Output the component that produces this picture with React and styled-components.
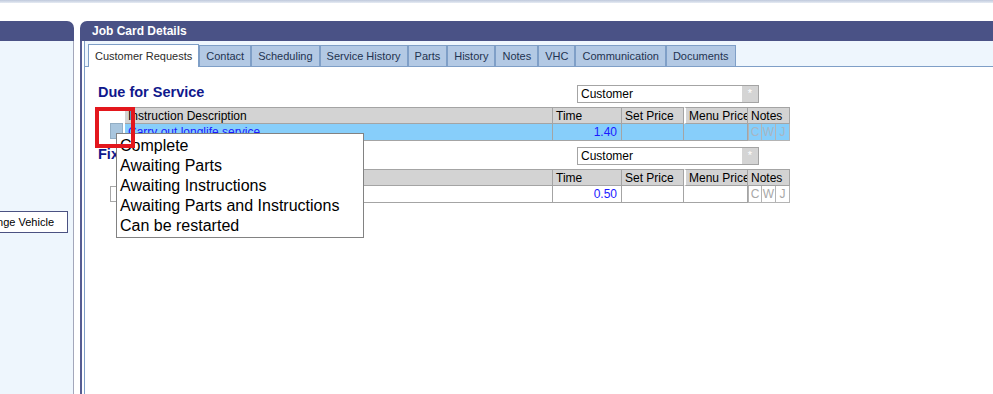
import React from "react";
import styled, { createGlobalStyle } from "styled-components";

const GlobalStyle = createGlobalStyle`
  html, body {
    margin: 0;
    padding: 0;
    background: #ffffff;
  }
  body {
    font-family: "Liberation Sans", Arial, sans-serif;
    font-size: 12px;
    color: #000;
  }
`;

const Page = styled.div`
  position: relative;
  height: 394px;
  display: flex;
  flex-direction: column;
  overflow: hidden;
`;

const TopStripe = styled.div`
  height: 3px;
  background: linear-gradient(#bfc9dc, #e6ebf3);
`;

const Workspace = styled.div`
  flex: 1;
  display: flex;
  gap: 6px;
  padding-top: 18px;
  min-height: 0;
`;

const SidePanel = styled.div`
  width: 74px;
  display: flex;
  flex-direction: column;
`;

const MainPanel = styled.div`
  flex: 1;
  display: flex;
  flex-direction: column;
  min-width: 0;
`;

const PanelHeader = styled.div`
  height: 20px;
  line-height: 21px;
  background: #4a5286;
  color: #ffffff;
  font-weight: bold;
  font-size: 12px;
  padding-left: 12px;
  border-radius: ${(p) => (p.$side === "left" ? "0 7px 0 0" : "7px 0 0 0")};
`;

const SideBody = styled.div`
  flex: 1;
  background: #eef6fd;
  border-right: 1px solid #a3a7bb;
  display: flex;
  justify-content: flex-end;
  align-items: flex-start;
  padding: 170px 5px 0 0;
  overflow: hidden;
`;

const SideButton = styled.button`
  flex-shrink: 0;
  height: 22px;
  padding: 0 13px 0 8px;
  background: #ffffff;
  border: 1px solid #4b5282;
  font-family: "Liberation Sans", Arial, sans-serif;
  font-size: 11px;
  color: #000;
  white-space: nowrap;
`;

const MainBody = styled.div`
  flex: 1;
  display: flex;
  border-left: 2px solid #565d92;
  padding-left: 2px;
`;

const MainInner = styled.div`
  flex: 1;
  display: flex;
  flex-direction: column;
  border-left: 1px solid #7f9fc7;
`;

const TabStrip = styled.div`
  height: 25px;
  background: #eef6fd;
  border-bottom: 1px solid #7f9fc7;
  display: flex;
  align-items: flex-end;
  padding-left: 3px;
`;

const Tab = styled.div`
  position: relative;
  box-sizing: border-box;
  height: ${(p) => (p.$active ? "23px" : "21px")};
  margin-bottom: ${(p) => (p.$active ? "-1px" : "0")};
  padding: ${(p) => (p.$active ? "5px 6px 0 6px" : "4px 6px 0 6px")};
  border: 1px solid #7f9fc7;
  border-bottom: none;
  background: ${(p) => (p.$active ? "#ffffff" : "#b3c9e4")};
  color: ${(p) => (p.$active ? "#2b2b2b" : "#1f3350")};
  font-size: 11px;
  white-space: nowrap;
  z-index: ${(p) => (p.$active ? 1 : 0)};
`;

const Content = styled.div`
  flex: 1;
  background: #ffffff;
  padding: 18px 0 0 13px;
  display: flex;
  flex-direction: column;
  gap: 6px;
`;

const Section = styled.div`
  display: flex;
  flex-direction: column;
  gap: 4px;
`;

const HeadingRow = styled.div`
  width: 692px;
  height: 18px;
  display: flex;
  align-items: center;
`;

const Title = styled.div`
  flex: 1;
  align-self: flex-start;
  line-height: 14px;
  color: #10188c;
  font-weight: bold;
  font-size: 14.5px;
  white-space: nowrap;
`;

const Select = styled.div`
  box-sizing: border-box;
  width: 182px;
  height: 18px;
  margin-right: 31px;
  border: 1px solid #a4a4a4;
  display: flex;
  align-items: center;
  padding-left: 3px;
  font-size: 12px;
`;

const SelectText = styled.span`
  flex: 1;
`;

const SelectButton = styled.span`
  width: 16px;
  height: 16px;
  background: #d4d4d4;
  color: #ffffff;
  font-size: 11px;
  text-align: center;
  line-height: 14px;
`;

const Grid = styled.div`
  margin-left: 12px;
  display: grid;
  grid-template-columns: 15px 428px 69px 62px 64px 42px;
  grid-auto-rows: 17px;
`;

const CheckCell = styled.div`
  display: flex;
  align-items: flex-start;
`;

const Check = styled.div`
  box-sizing: border-box;
  width: 13px;
  height: 16px;
  margin-top: ${(p) => (p.$checked ? "-1px" : "0")};
  border: 1px solid ${(p) => (p.$checked ? "#93aec4" : "#a8a8a8")};
  background: ${(p) => (p.$checked ? "#a9c6de" : "#ffffff")};
`;

const HeadCell = styled.div`
  box-sizing: border-box;
  background: #d3d3d3;
  border-top: 1px solid #a4a4a4;
  border-bottom: 1px solid #a4a4a4;
  border-right: 1px solid #a4a4a4;
  border-left: ${(p) => (p.$gap ? "2px solid #ffffff" : "none")};
  padding: 1px 0 0 3px;
  font-size: 12px;
  white-space: nowrap;
  overflow: hidden;
`;

const Cell = styled.div`
  box-sizing: border-box;
  background: ${(p) => (p.$selected ? "#87cefa" : "#ffffff")};
  border-bottom: 1px solid #a4a4a4;
  border-right: 1px solid #a4a4a4;
  padding: 1px 4px 0 3px;
  font-size: 12px;
  text-align: ${(p) => (p.$right ? "right" : "left")};
  color: #1a1aff;
  white-space: nowrap;
  overflow: hidden;
`;

const Link = styled.span`
  text-decoration: underline;
  color: #1a1aff;
`;

const NotesCell = styled.div`
  display: grid;
  grid-template-columns: 14px 14px 14px;
  background: ${(p) => (p.$selected ? "#87cefa" : "#ffffff")};
`;

const NoteFlag = styled.div`
  box-sizing: border-box;
  border-right: 1px solid #b4b4b4;
  border-bottom: 1px solid #b4b4b4;
  border-left: ${(p) => (p.$first ? "1px solid #b4b4b4" : "none")};
  color: ${(p) => (p.$selected ? "#a8b6c4" : "#a8a8a8")};
  font-size: 12px;
  text-align: center;
  padding-top: 1px;
`;

const Menu = styled.div`
  position: absolute;
  left: 116px;
  top: 133px;
  box-sizing: border-box;
  width: 248px;
  height: 105px;
  background: #ffffff;
  border: 1px solid #828282;
  padding: 2px 0 0 3px;
  z-index: 5;
`;

const MenuItem = styled.div`
  height: 20px;
  line-height: 20px;
  font-size: 16px;
  color: #000;
  white-space: nowrap;
`;

const Highlight = styled.div`
  position: absolute;
  left: 95px;
  top: 107px;
  box-sizing: border-box;
  width: 40px;
  height: 41px;
  border: 4px solid #e3171d;
  z-index: 6;
`;

const tabs = [
  "Customer Requests",
  "Contact",
  "Scheduling",
  "Service History",
  "Parts",
  "History",
  "Notes",
  "VHC",
  "Communication",
  "Documents",
];

const sections = [
  { title: "Due for Service", desc: "Carry out longlife service", time: "1.40", selected: true },
  { title: "Fixed Price Service", desc: "Check tyre pressures", time: "0.50", selected: false },
];

const statuses = [
  "Complete",
  "Awaiting Parts",
  "Awaiting Instructions",
  "Awaiting Parts and Instructions",
  "Can be restarted",
];

function RequestSection({ title, desc, time, selected }) {
  return (
    <Section>
      <HeadingRow>
        <Title>{title}</Title>
        <Select>
          <SelectText>Customer</SelectText>
          <SelectButton>*</SelectButton>
        </Select>
      </HeadingRow>
      <Grid>
        <div />
        <HeadCell>Instruction Description</HeadCell>
        <HeadCell>Time</HeadCell>
        <HeadCell>Set Price</HeadCell>
        <HeadCell $gap>Menu Price</HeadCell>
        <HeadCell>Notes</HeadCell>

        <CheckCell>
          <Check $checked={selected} />
        </CheckCell>
        <Cell $selected={selected}>
          <Link>{desc}</Link>
        </Cell>
        <Cell $selected={selected} $right>
          {time}
        </Cell>
        <Cell $selected={selected} />
        <Cell $selected={selected} />
        <NotesCell $selected={selected}>
          {["C", "W", "J"].map((f, i) => (
            <NoteFlag key={f} $first={i === 0} $selected={selected}>
              {f}
            </NoteFlag>
          ))}
        </NotesCell>
      </Grid>
    </Section>
  );
}

export default function App() {
  return (
    <>
      <GlobalStyle />
      <Page>
        <TopStripe />
        <Workspace>
          <SidePanel>
            <PanelHeader $side="left" />
            <SideBody>
              <SideButton>Change Vehicle</SideButton>
            </SideBody>
          </SidePanel>
          <MainPanel>
            <PanelHeader $side="right">Job Card Details</PanelHeader>
            <MainBody>
              <MainInner>
                <TabStrip>
                  {tabs.map((t, i) => (
                    <Tab key={t} $active={i === 0}>
                      {t}
                    </Tab>
                  ))}
                </TabStrip>
                <Content>
                  {sections.map((s) => (
                    <RequestSection key={s.title} {...s} />
                  ))}
                </Content>
              </MainInner>
            </MainBody>
          </MainPanel>
        </Workspace>
        <Menu>
          {statuses.map((s) => (
            <MenuItem key={s}>{s}</MenuItem>
          ))}
        </Menu>
        <Highlight />
      </Page>
    </>
  );
}
